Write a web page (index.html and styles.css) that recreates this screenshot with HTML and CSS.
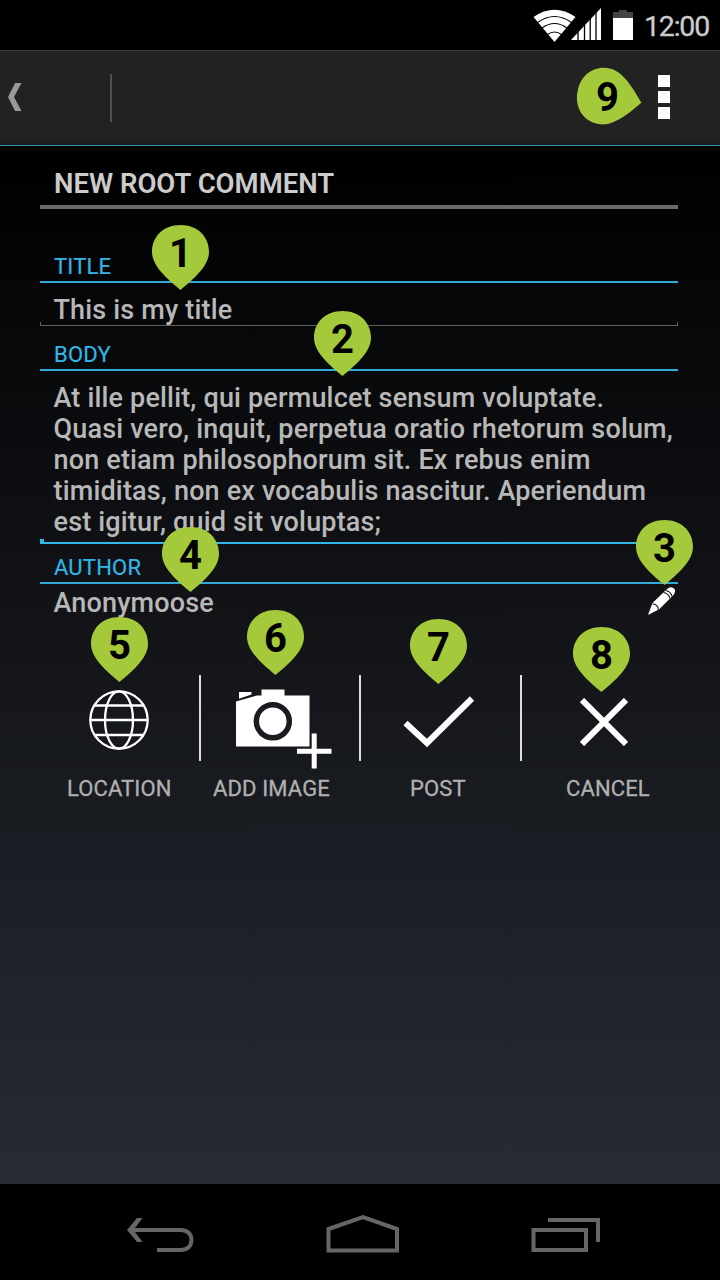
FILE: index.html
```html
<!DOCTYPE html>
<html lang="en">
<head>
<meta charset="utf-8">
<title>New root comment</title>
<link rel="stylesheet" href="styles.css">
</head>
<body>
<div class="screen">
  <header class="status">
    <svg class="wifi" width="44" height="36" viewBox="0 0 44 36">
      <path fill="#fff" d="M0.500 10Q21.500 -4.500 42.500 10L21.500 35Z"/>
      <g fill="none" stroke="#000" stroke-width="1.200"><path d="M4.500 15.500Q21.500 3.500 38.500 15.500M9 21Q21.500 12 34 21M14.500 27.500Q21.500 22.500 28.500 27.500"/></g>
    </svg>
    <svg class="signal" width="31" height="33" viewBox="0 0 31 33">
      <path fill="#fff" d="M0 32L30 0V32Z"/>
      <path stroke="#000" stroke-width="1.300" d="M7 20V33M13.500 14V33M19.200 8V33M25 2V33"/>
    </svg>
    <svg class="battery" width="20" height="30" viewBox="0 0 20 30">
      <path fill="#444" d="M6 0H14V2H20V8H0V2H6Z"/><path fill="#fff" d="M0 8H20V30H0Z"/>
    </svg>
    <span class="clock">12:00</span>
  </header>
  <nav class="actionbar">
    <svg class="up" width="14" height="28" viewBox="0 0 14 28"><path fill="#999" d="M7 0H13.500L6 14L13.500 28H7L0 14Z"/></svg>
    <span class="bar-divider"></span>
    <span class="overflow"><i></i><i></i><i></i></span>
  </nav>
  <main class="content">
    <h1 class="heading"><span>NEW ROOT COMMENT</span></h1>
    <section class="field field-title">
      <h2 class="label">TITLE</h2>
      <p class="value input">This is my title</p>
    </section>
    <section class="field field-body">
      <h2 class="label">BODY</h2>
      <p class="value input focused">At ille pellit, qui permulcet sensum voluptate.<br>Quasi vero, inquit, perpetua oratio rhetorum solum,<br>non etiam philosophorum sit. Ex rebus enim<br>timiditas, non ex vocabulis nascitur. Aperiendum<br>est igitur, quid sit voluptas;</p>
    </section>
    <section class="field field-author">
      <h2 class="label">AUTHOR</h2>
      <div class="author-row">
        <p class="value">Anonymoose</p>
        <svg class="pencil" width="28" height="28" viewBox="0 0 28 28">
          <path fill="#fff" d="M0 28L4.500 16L18.500 2.500Q23 -1.500 26.500 2Q28 4.500 25.500 8L11.500 22Z"/>
          <path fill="none" stroke="#14171a" stroke-width="1.200" d="M4.500 17Q9.500 17 10.500 22.500M15.500 5.500Q21 6.500 22 11.500M17.800 3.500Q23 4.500 24 9.500"/>
        </svg>
      </div>
    </section>
    <div class="actions">
      <div class="action location">
        <div class="icon"><svg width="60" height="60" viewBox="0 0 60 60"><g fill="none" stroke="#fff" stroke-width="2.300"><circle cx="30" cy="30" r="28.700"/><ellipse cx="30" cy="30" rx="14" ry="28.700"/><path d="M6 15.500H54M1 30H59M6 45H54"/></g></svg></div>
        <span class="caption">LOCATION</span>
      </div>
      <div class="action image">
        <div class="icon"><svg width="96" height="80" viewBox="0 0 96 80"><path fill="#fff" d="M3 3H15.500V5.500L3 9.700ZM0 12.500L21 6.500H25.500V0.500H48.500V6.500H73.500V57.500H0Z"/><circle cx="36.800" cy="32.300" r="16.500" fill="#fff" stroke="#191c20" stroke-width="5.500"/><path d="M61 62.300H95.500M78.200 44.500V79.500" stroke="#fff" stroke-width="5"/></svg></div>
        <span class="caption">ADD IMAGE</span>
      </div>
      <div class="action post">
        <div class="icon"><svg width="72" height="54" viewBox="0 0 72 54"><path fill="none" stroke="#fff" stroke-width="6" d="M2.500 27L24 47L69 2.500"/></svg></div>
        <span class="caption">POST</span>
      </div>
      <div class="action cancel">
        <div class="icon"><svg width="48" height="48" viewBox="0 0 48 48"><path stroke="#fff" stroke-width="6" d="M2 2L46 46M46 2L2 46"/></svg></div>
        <span class="caption">CANCEL</span>
      </div>
    </div>
  </main>
  <footer class="navbar">
    <svg width="68" height="36" viewBox="0 0 68 36"><g fill="none" stroke="#666" stroke-width="4"><path d="M5 13H53Q64 13 64.500 23Q64 33 53 33H30"/></g><path fill="#666" d="M10 1H15.500L6.500 13L15.500 25H10L0 13Z"/></svg>
    <svg width="74" height="40" viewBox="0 0 74 40"><path fill="none" stroke="#666" stroke-width="4" d="M2.500 36.500V15L37 3L71 15V36.500Z"/></svg>
    <svg width="70" height="36" viewBox="0 0 70 36"><path fill="none" stroke="#666" stroke-width="4" d="M2.500 13H55V33H2.500ZM17 3H67V25"/></svg>
  </footer>

  <div class="pin pin-1"><svg viewBox="0 0 57 65"><path d="M28.500 65C18 56 0 42 0 27C0 11 12 0 28.500 0S57 11 57 27C57 42 39 56 28.500 65Z"/></svg><b>1</b></div>
  <div class="pin pin-2"><svg viewBox="0 0 57 65"><path d="M28.500 65C18 56 0 42 0 27C0 11 12 0 28.500 0S57 11 57 27C57 42 39 56 28.500 65Z"/></svg><b>2</b></div>
  <div class="pin pin-3"><svg viewBox="0 0 57 65"><path d="M28.500 65C18 56 0 42 0 27C0 11 12 0 28.500 0S57 11 57 27C57 42 39 56 28.500 65Z"/></svg><b>3</b></div>
  <div class="pin pin-4"><svg viewBox="0 0 57 65"><path d="M28.500 65C18 56 0 42 0 27C0 11 12 0 28.500 0S57 11 57 27C57 42 39 56 28.500 65Z"/></svg><b>4</b></div>
  <div class="pin pin-5"><svg viewBox="0 0 57 65"><path d="M28.500 65C18 56 0 42 0 27C0 11 12 0 28.500 0S57 11 57 27C57 42 39 56 28.500 65Z"/></svg><b>5</b></div>
  <div class="pin pin-6"><svg viewBox="0 0 57 65"><path d="M28.500 65C18 56 0 42 0 27C0 11 12 0 28.500 0S57 11 57 27C57 42 39 56 28.500 65Z"/></svg><b>6</b></div>
  <div class="pin pin-7"><svg viewBox="0 0 57 65"><path d="M28.500 65C18 56 0 42 0 27C0 11 12 0 28.500 0S57 11 57 27C57 42 39 56 28.500 65Z"/></svg><b>7</b></div>
  <div class="pin pin-8"><svg viewBox="0 0 57 65"><path d="M28.500 65C18 56 0 42 0 27C0 11 12 0 28.500 0S57 11 57 27C57 42 39 56 28.500 65Z"/></svg><b>8</b></div>
  <div class="pin pin-9"><svg viewBox="0 0 57 65"><path d="M28.500 65C18 56 0 42 0 27C0 11 12 0 28.500 0S57 11 57 27C57 42 39 56 28.500 65Z"/></svg><b>9</b></div>
</div>
</body>
</html>
```
FILE: styles.css
```css
* { box-sizing: border-box; margin: 0; padding: 0; }
body { background: #000; font-family: Roboto, "Liberation Sans", sans-serif; }
svg { display: block; flex: none; }
.screen { position: relative; width: 720px; height: 1280px; overflow: hidden; display: flex; flex-direction: column; background: #000; }

.status { height: 50px; flex: none; display: flex; padding-left: 533px; }
.wifi { margin-top: 7px; }
.signal { margin: 8px 0 0 -6px; }
.battery { margin: 10px 0 0 11px; }
.clock { margin: 10px 0 0 11px; font-size: 28.5px; line-height: 34px; color: #ccc; letter-spacing: -1.2px; white-space: nowrap; -webkit-text-stroke: 0.3px #ccc; }

.actionbar { height: 96px; flex: none; display: flex; padding: 0 50px 0 8px; border-top: 1px solid #3c3c3c; border-bottom: 1px solid #2f8fb8; background: linear-gradient(#222 90px, #1c1c1c 90px); }
.up { margin-top: 32px; }
.bar-divider { width: 2px; height: 48px; margin: 23px 0 0 88px; background: #505050; }
.overflow { margin: 24px 0 0 auto; display: flex; flex-direction: column; gap: 4px; }
.overflow i { width: 12px; height: 12px; background: #fff; }

.content { height: 1038px; flex: none; padding: 21px 42px 0 40px; background: linear-gradient(#000, #272b34); }
.heading { height: 42px; padding-left: 14px; font-size: 27.5px; line-height: 34px; font-weight: 600; letter-spacing: 0; color: #ccc; border-bottom: 4px solid #6a6a6a; white-space: nowrap; }
.label { height: 29px; padding-left: 14px; font-size: 22px; line-height: 26px; font-weight: 400; letter-spacing: 0.2px; color: #33b5e5; border-bottom: 2px solid #33a9d8; white-space: nowrap; -webkit-text-stroke: 0.2px #33b5e5; }
.value { padding-left: 13.5px; font-size: 27px; line-height: 31px; font-weight: 500; letter-spacing: 0.17px; color: #b8b8b8; white-space: nowrap; }
.field-title { margin-top: 45px; }
.field-title .input { margin-top: 12px; height: 31px; position: relative; border-bottom: 1px solid #606060; }
.input::before, .input::after { content: ""; position: absolute; bottom: 0; width: 1px; height: 3px; background: #606060; }
.input::before { left: 0; }
.input::after { right: 0; }
.field-body { margin-top: 16px; }
.field-body .input { position: relative; margin-top: 12px; height: 161px; border-bottom: 2px solid #33b5e5; }
.input.focused::before, .input.focused::after { width: 4px; background: #33b5e5; }
.field-author { margin-top: 11px; }
.author-row { display: flex; justify-content: space-between; margin-top: 3px; padding-right: 2px; height: 31px; }
.author-row .value { margin-top: 1px; }

.actions { display: grid; grid-template-columns: 159px 160px 161px 158px; margin-top: 57px; }
.action { height: 130px; display: flex; flex-direction: column; }
.icon { height: 86px; display: flex; }
.action:not(:last-child) .icon { border-right: 2px solid #ddd; }
.action:not(:last-child) { margin-right: -2px; }
.caption { margin-top: 15px; font-size: 22px; line-height: 26px; letter-spacing: 0.12px; color: #b0b0b0; white-space: nowrap; -webkit-text-stroke: 0.3px #b0b0b0; }
.location .icon { padding: 15px 0 0 49px; }
.location .caption { padding-left: 27px; }
.image .icon { padding: 14px 0 0 37px; }
.image .caption { padding-left: 14px; }
.post .icon { padding: 21px 0 0 44px; }
.post .caption { padding-left: 51px; }
.cancel .icon { padding: 23px 0 0 60px; }
.cancel .caption { padding-left: 46px; }

.navbar { height: 96px; flex: none; display: flex; align-items: flex-start; padding: 30px 0 0 127px; }
.navbar svg { margin: 3px 131px 0 0; }
.navbar svg:nth-child(2) { margin-top: 0; }

.pin { position: absolute; width: 57px; height: 65px; }
.pin svg { width: 57px; height: 65px; fill: #a4c93a; }
.pin b { position: absolute; left: 0; top: 7px; width: 57px; text-align: center; font-size: 40px; line-height: 44px; font-weight: 700; color: #000; }
.pin-1 { left: 152px; top: 225px; }
.pin-2 { left: 314px; top: 311px; }
.pin-3 { left: 636px; top: 520px; }
.pin-4 { left: 162px; top: 527px; }
.pin-5 { left: 91px; top: 617px; }
.pin-6 { left: 247px; top: 610px; }
.pin-7 { left: 410px; top: 619px; }
.pin-8 { left: 573px; top: 627px; }
.pin-9 { left: 577px; top: 68px; }
.pin-9 svg { transform: rotate(-80deg); transform-origin: 28.5px 28.5px; }
.pin-9 b { left: 2px; top: 8px; }
```
